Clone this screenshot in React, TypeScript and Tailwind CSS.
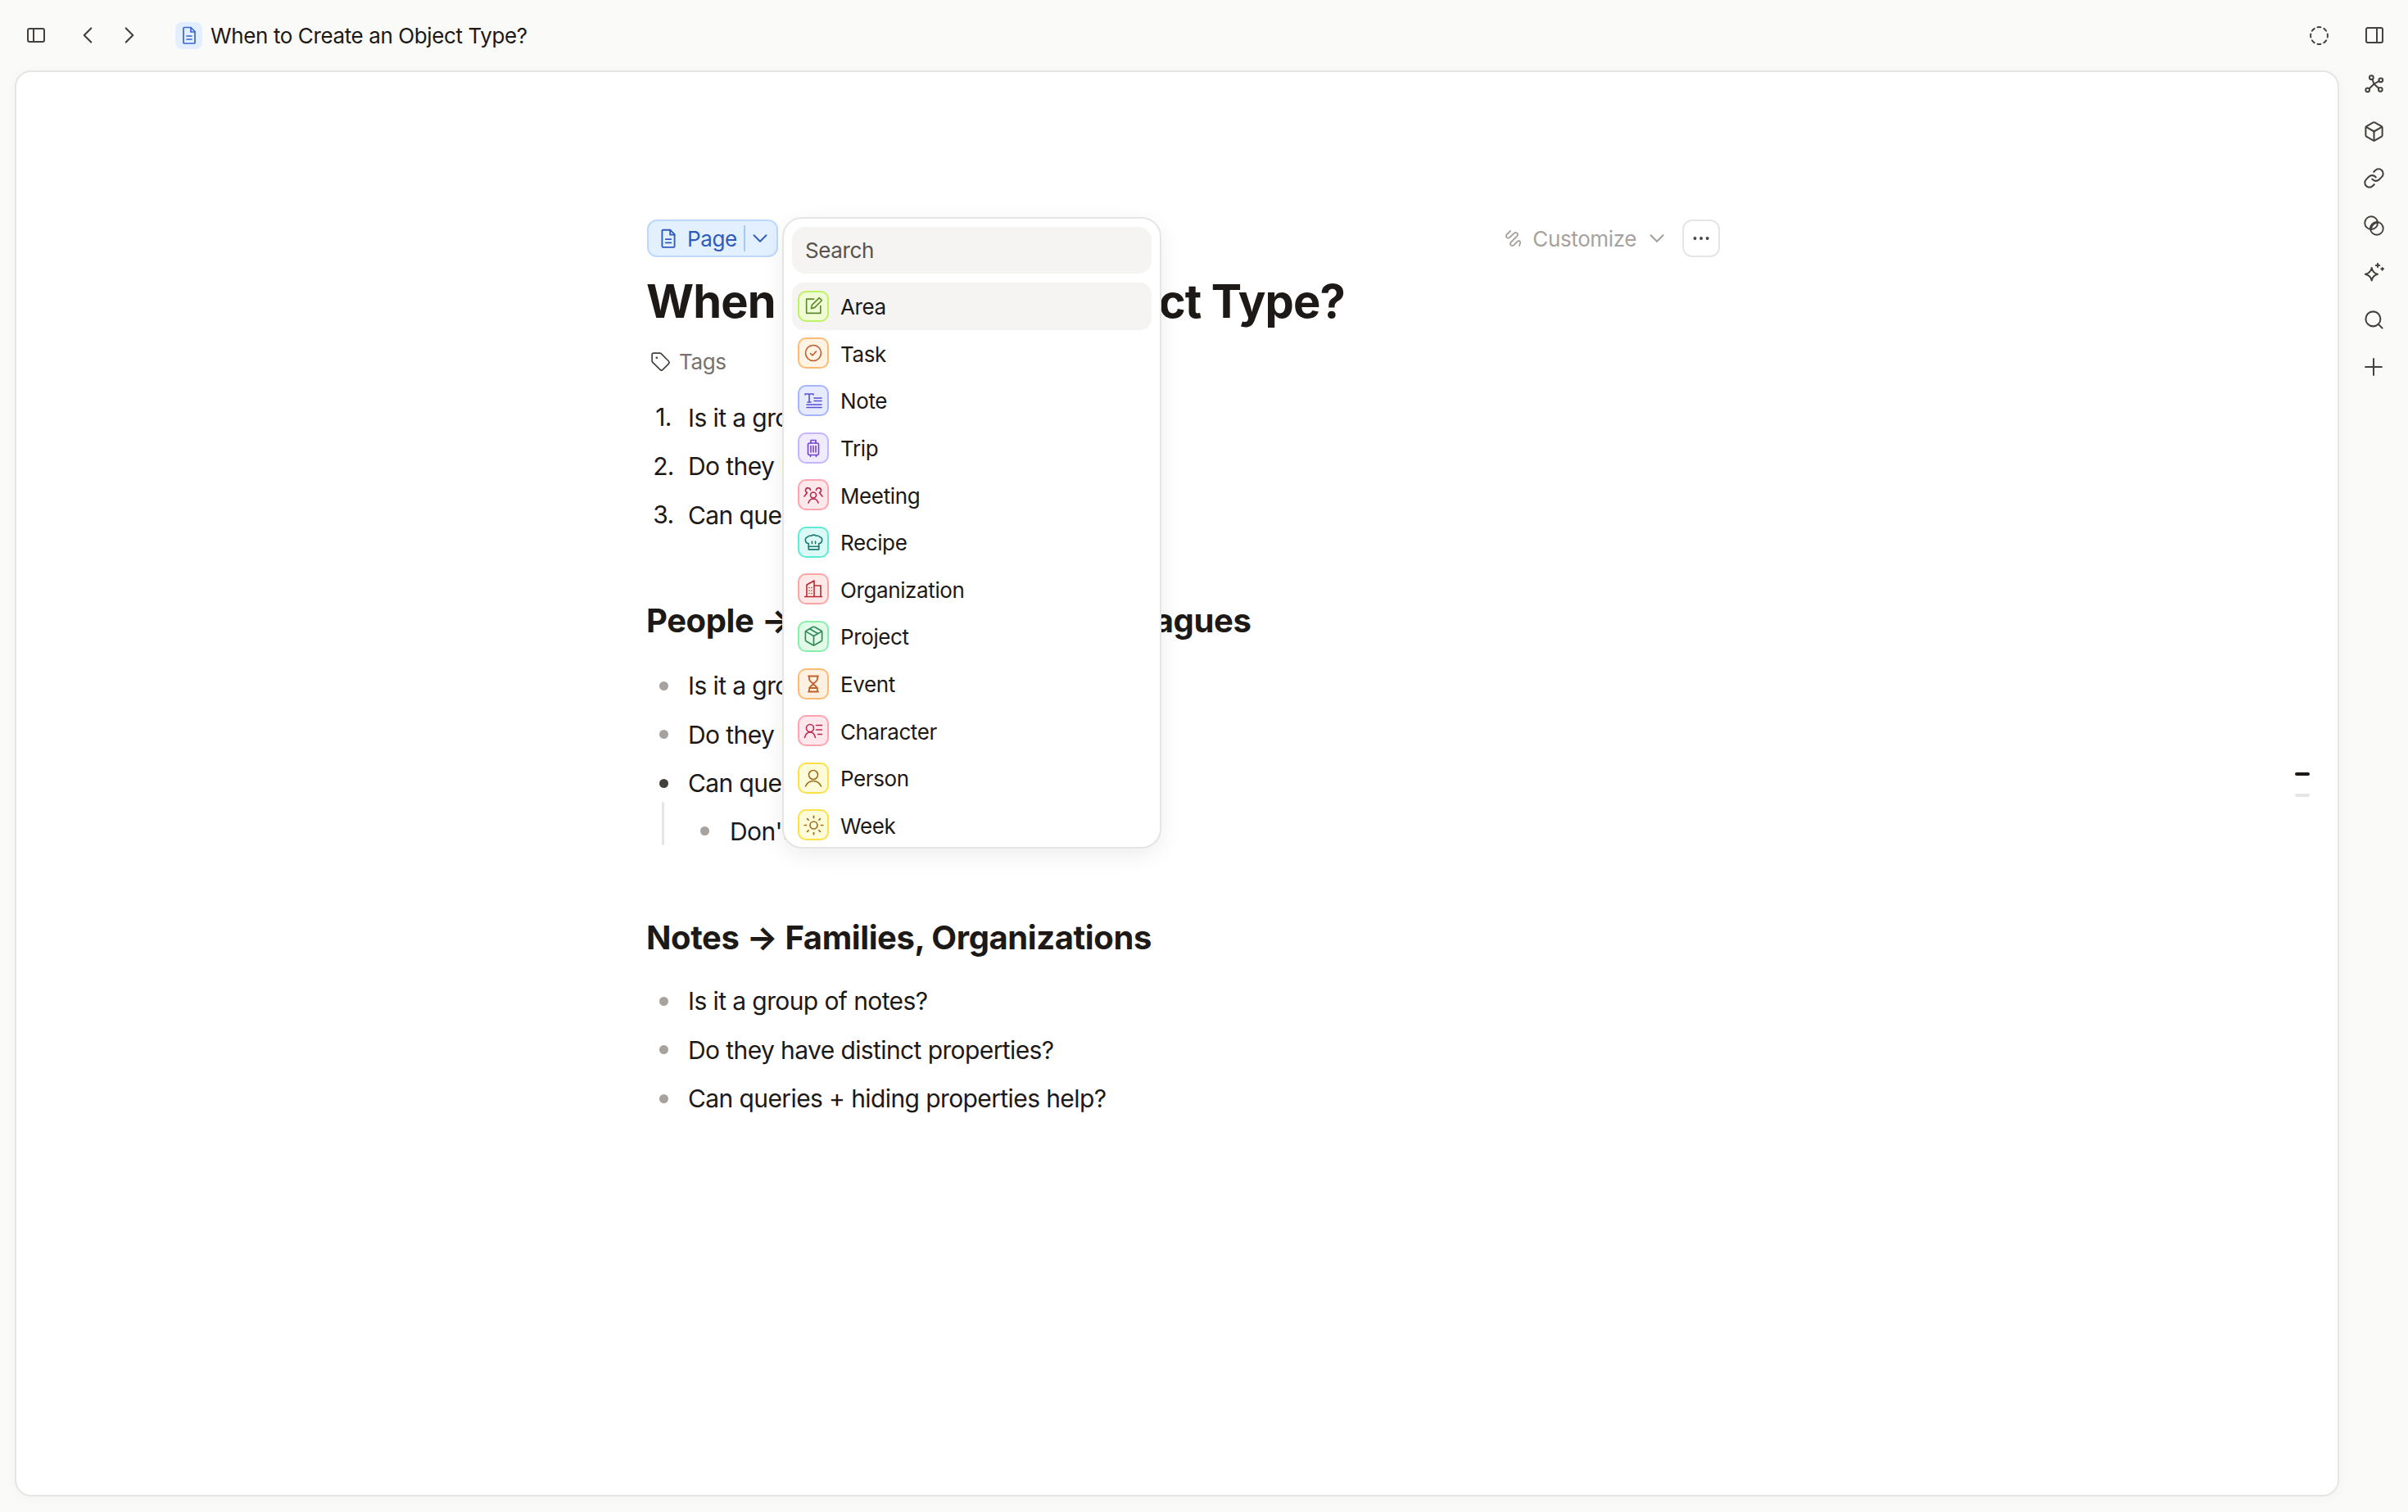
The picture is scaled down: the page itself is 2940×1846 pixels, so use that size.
import React from 'react';
import { ChevronDown, ChevronLeft, ChevronRight, CircleDashed, Ellipsis, Package, Plus, Search, Sun, Tag, Box, Link } from 'lucide-react';

const Ico = ({ size = 24, sw = 1.6, className = '', children }: { size?: number; sw?: number; className?: string; children: React.ReactNode }) => (
  <svg width={size} height={size} viewBox="0 0 24 24" fill="none" stroke="currentColor" strokeWidth={sw} strokeLinecap="round" strokeLinejoin="round" className={className}>
    {children}
  </svg>
);

const DocIcon = ({ size = 24, className = '' }: { size?: number; className?: string }) => (
  <Ico size={size} sw={1.7} className={className}>
    <path d="M6 2.500h8l5 5V21a1 1 0 0 1-1 1H6a1 1 0 0 1-1-1V3.500a1 1 0 0 1 1-1z" />
    <path d="M14 2.500V8h5M9 13h6M9 17h6" />
  </Ico>
);

const types = [
  {
    name: 'Area',
    tile: 'bg-[#f0fdd4] border-[#bef264] text-[#5f8a2e]',
    icon: (
      <Ico size={25}>
        <path d="M12 4H3.500v16.500H20V12" />
        <path d="M9 15l1-4 8.500-8.500 3 3L13 14z" />
      </Ico>
    ),
  },
  {
    name: 'Task',
    tile: 'bg-[#fff3e4] border-[#fdba74] text-[#c2582b]',
    icon: (
      <Ico>
        <circle cx="12" cy="12" r="9.500" />
        <path d="M8.500 12.500l2.500 2.500 4.500-5" />
      </Ico>
    ),
  },
  {
    name: 'Note',
    tile: 'bg-[#e6ebff] border-[#a5b4fc] text-[#5b4fd1]',
    icon: (
      <Ico>
        <path d="M2 5V4h10v1M7 4v10M5 14h4M13 9h9M13 12.500h9M4 17h18M4 20.500h18" />
      </Ico>
    ),
  },
  {
    name: 'Trip',
    tile: 'bg-[#f1ebff] border-[#c4b5fd] text-[#7341d6]',
    icon: (
      <Ico>
        <rect x="5.500" y="6" width="13" height="14.500" rx="2" />
        <path d="M9 6V2.500h6V6M9 9.500v7.500M12 9.500v7.500M15 9.500v7.500M8.500 20.500v2M15.500 20.500v2" />
      </Ico>
    ),
  },
  {
    name: 'Meeting',
    tile: 'bg-[#ffe8ec] border-[#fda4af] text-[#b3274a]',
    icon: (
      <Ico>
        <circle cx="12" cy="12.500" r="3.500" />
        <path d="M6 22c1-3.500 3-5 6-5s5 1.500 6 5M8.500 6.500a3 3 0 1 0-4 3L1 14M15.500 6.500a3 3 0 1 1 4 3L23 14" />
      </Ico>
    ),
  },
  {
    name: 'Recipe',
    tile: 'bg-[#dcfaf5] border-[#5eead4] text-[#1a7b72]',
    icon: (
      <Ico size={25}>
        <path d="M6 21h12v-7a4 4 0 0 0 1-7.800A4 4 0 0 0 14.800 5a4.500 4.500 0 0 0-5.600 0A4 4 0 0 0 5 6.200 4 4 0 0 0 6 14z" />
        <path d="M6 17.500h12M10 11.500v2.500M14 11.500v2.500" />
      </Ico>
    ),
  },
  {
    name: 'Organization',
    tile: 'bg-[#ffe8e8] border-[#fca5a5] text-[#b42b30]',
    icon: (
      <Ico>
        <path d="M1.500 21.500h21M4 21.500V7l9-5v19.500M13 8h8v13.500" />
        <path d="M7 10.500h.01M10 10.500h.01M7 14h.01M10 14h.01M7 17.500h.01M10 17.500h.01" />
      </Ico>
    ),
  },
  {
    name: 'Project',
    tile: 'bg-[#e2fbe9] border-[#86efac] text-[#2f8a56]',
    icon: <Package size={27} strokeWidth={1.5} />,
  },
  {
    name: 'Event',
    tile: 'bg-[#fff1e2] border-[#fdba74] text-[#c2612b]',
    icon: (
      <Ico sw={1.8}>
        <path d="M6 2.500h12M6 21.500h12M7 2.500V6c0 3 5 5 5 6s-5 3-5 6v3.500M17 2.500V6c0 3-5 5-5 6s5 3 5 6v3.500M7 17h10" />
      </Ico>
    ),
  },
  {
    name: 'Character',
    tile: 'bg-[#ffe7ed] border-[#fda4af] text-[#b9284f]',
    icon: (
      <Ico>
        <circle cx="8" cy="9" r="4.500" />
        <path d="M1.500 20.500c1-4.500 3.500-6.500 6.500-6.500s5.500 2 6.500 6.500M15.500 5.500h7M15.500 11h7M17.500 16.500h5" />
      </Ico>
    ),
  },
  {
    name: 'Person',
    tile: 'bg-[#fefbd8] border-[#fde047] text-[#a16c1b]',
    icon: (
      <Ico>
        <circle cx="12" cy="8" r="5.500" />
        <path d="M2.500 22c2-4.500 5-6.500 9.500-6.500s7.500 2 9.500 6.500" />
      </Ico>
    ),
  },
  {
    name: 'Week',
    tile: 'bg-[#fefbd8] border-[#fde047] text-[#a16c1b]',
    icon: <Sun size={27} strokeWidth={1.5} />,
  },
];

const railIcons = [
  <Ico key="graph" size={25} sw={1.9}>
    <circle cx="9" cy="4.500" r="2.300" />
    <circle cx="20" cy="7.500" r="2.300" />
    <circle cx="4.500" cy="19" r="2.300" />
    <circle cx="19.500" cy="18.500" r="2.300" />
    <path d="M10 6.500l2 5.500M18 8.500l-6 3.500M6.300 17.500L12 12M17.500 17L12 12" />
  </Ico>,
  <Box key="box" size={27} strokeWidth={1.8} />,
  <Link key="link" size={27} strokeWidth={1.8} />,
  <Ico key="overlap" size={27} sw={1.7}>
    <circle cx="9" cy="9" r="7" />
    <circle cx="15" cy="15" r="7" />
    <path d="M9 15.500a7 7 0 0 1 6.500-6.500" />
  </Ico>,
  <Ico key="spark" size={27} sw={1.7}>
    <path d="M9.500 7c.7 4 2.500 6 6.500 7-4 1-5.800 3-6.500 7-.7-4-2.500-6-7-7 4.500-1 6.300-3 7-7z" />
    <path d="M16 2.500v4M14 4.500h4M21 7v2.500M19.800 8.200h2.500" />
  </Ico>,
  <Search key="search" size={27} strokeWidth={1.8} />,
  <Plus key="plus" size={34} strokeWidth={1.4} />,
];

const Bullet = ({ dark = false }: { dark?: boolean }) => (
  <span className={`block w-[11px] h-[11px] rounded-full ${dark ? 'bg-[#44403c]' : 'bg-[#a8a29e]'}`} />
);

const Item = ({ marker, children }: { marker: React.ReactNode; children: React.ReactNode }) => (
  <div className="flex items-center h-[59.5px] text-[30px] tracking-[-0.02em] text-[#1c1917]">
    <span className="w-[40px] flex justify-center shrink-0 mt-[2px]">{marker}</span>
    <span className="ml-[10px] mt-[3px] whitespace-nowrap">{children}</span>
  </div>
);

export default function App() {
  return (
    <div className="w-full h-screen overflow-hidden flex flex-col bg-[#fafaf8] text-[#1c1917] font-['Inter',sans-serif]">
      {/* Top bar */}
      <div className="h-[86px] shrink-0 flex items-center text-[#44403c]">
        <div className="w-[22px] h-[18px] ml-[33px] rounded-[3px] border-[2.500px] border-[#44403c] flex">
          <div className="w-[7px] border-r-[2.500px] border-[#44403c]" />
        </div>
        <ChevronLeft size={34} strokeWidth={1.5} className="ml-[35px]" />
        <ChevronRight size={34} strokeWidth={1.5} className="ml-[17px]" />
        <div className="ml-[39px] w-[33px] h-[33px] rounded-[8px] bg-[#e3efff] text-[#3b66d0] flex items-center justify-center">
          <DocIcon size={24} />
        </div>
        <span className="ml-[10px] text-[26px] tracking-[-0.015em] text-[#1c1917] whitespace-nowrap">When to Create an Object Type?</span>
        <div className="ml-auto flex items-center">
          <CircleDashed size={25} strokeWidth={1.9} />
          <div className="ml-[44px] mr-[30px] w-[22px] h-[20px] rounded-[3px] border-[2.500px] border-[#44403c] flex justify-end">
            <div className="w-[7px] border-l-[2.500px] border-[#44403c]" />
          </div>
        </div>
      </div>

      <div className="flex-1 min-h-0 flex">
        {/* Document card */}
        <div className="relative flex-1 ml-[18px] mb-[19px] bg-white rounded-[20px] border-2 border-[#e7e5e4] shadow-[0_2px_16px_rgba(0,0,0,0.03)] pt-[180px] pl-[770px]">
          <div className="w-[1310px]">
            <div className="relative flex items-center justify-between h-[46px]">
              <div className="flex items-center w-[160px] h-[46px] rounded-[12px] border-2 border-[#bcd9fb] bg-[#e3f0ff] text-[#2f5bbf]">
                <DocIcon size={26} className="ml-[11px] shrink-0" />
                <span className="ml-[10px] text-[26px] tracking-[-0.015em] w-[60px]">Page</span>
                <span className="ml-[9px] w-[1.500px] h-[32px] bg-[#a8c8f0]" />
                <ChevronDown size={30} strokeWidth={1.5} className="ml-[3px]" />
              </div>
              <div className="flex items-center text-[#a8a29e]">
                <Ico size={24} sw={1.8}>
                  <path d="M8 3L3.500 7.500a2.500 2.500 0 0 0 3.500 3.500L13 5.500a2.500 2.500 0 0 1 3.500 3.500L8.500 17a2.500 2.500 0 0 0 3.500 3.500l5-5a2 2 0 0 1 3 2.500L19 21" />
                </Ico>
                <span className="ml-[11px] text-[26px] tracking-[-0.015em] whitespace-nowrap">Customize</span>
                <ChevronDown size={30} strokeWidth={1.7} className="ml-[10px]" />
                <div className="ml-[16px] w-[46px] h-[46px] rounded-[12px] border-2 border-[#e7e5e4] flex items-center justify-center text-[#44403c]">
                  <Ellipsis size={26} strokeWidth={1.6} />
                </div>
              </div>

              {/* Type picker */}
              <div className="absolute left-[165px] top-[-3px] w-[463px] h-[771px] z-10 overflow-hidden rounded-[24px] border-2 border-[#e7e5e4] bg-white shadow-[0_8px_28px_rgba(0,0,0,0.07)] pt-[10px] px-[10px]">
                <div className="h-[57px] rounded-[16px] bg-[#f5f4f2] flex items-center pl-[16px] text-[26px] tracking-[-0.015em] text-[#57534e]">Search</div>
                <div className="mt-[11px]">
                  {types.map((t, i) => (
                    <div key={t.name} className={`flex items-center h-[57.6px] pl-[7px] rounded-[14px] ${i === 0 ? 'bg-[#f5f4f2]' : ''}`}>
                      <div className={`w-[38px] h-[38px] rounded-[10px] border-2 flex items-center justify-center shrink-0 ${t.tile}`}>{t.icon}</div>
                      <span className="ml-[14px] mt-[2px] text-[26px] tracking-[-0.015em] text-[#1c1917]">{t.name}</span>
                    </div>
                  ))}
                </div>
              </div>
            </div>

            <h1 className="mt-[14px] ml-[-1px] h-[80px] flex items-center text-[56px] font-bold tracking-[-0.016em] whitespace-nowrap">When to Create an Object Type?</h1>
            <div className="mt-[9px] h-[48px] flex items-center ml-[4px] text-[26px] tracking-[-0.015em] text-[#78716c]">
              <Tag size={25} strokeWidth={1.6} className="text-[#44403c]" />
              <span className="ml-[10px]">Tags</span>
            </div>

            <div className="mt-[14px]">
              <Item marker="1.">Is it a group of people?</Item>
              <Item marker="2.">Do they have distinct properties?</Item>
              <Item marker="3.">Can queries + hiding properties help?</Item>
            </div>

            <h2 className="mt-[70px] ml-[-1px] h-[60px] flex items-center text-[40px] font-bold tracking-[-0.01em] whitespace-nowrap">People → Friends, Family &amp; Colleagues</h2>
            <div className="mt-[19px]">
              <Item marker={<Bullet />}>Is it a group of people?</Item>
              <Item marker={<Bullet />}>Do they have distinct properties?</Item>
              <Item marker={<Bullet dark />}>Can queries + hiding properties help?</Item>
              <div className="flex">
                <div className="ml-[18px] mt-[-6px] w-[3px] h-[53px] rounded-full bg-[#e7e5e4]" />
                <div className="flex items-center h-[59.5px] text-[30px] tracking-[-0.02em] pl-[44px]">
                  <Bullet />
                  <span className="ml-[25px] mt-[2px] whitespace-nowrap">Don't over-create types</span>
                </div>
              </div>
            </div>

            <h2 className="mt-[70px] ml-[-1px] h-[60px] flex items-center text-[40px] font-bold tracking-[-0.01em] whitespace-nowrap">Notes → Families, Organizations</h2>
            <div className="mt-[17px]">
              <Item marker={<Bullet />}>Is it a group of notes?</Item>
              <Item marker={<Bullet />}>Do they have distinct properties?</Item>
              <Item marker={<Bullet />}>Can queries + hiding properties help?</Item>
            </div>
          </div>

          {/* Scroll markers */}
          <div className="absolute right-[34px] top-[855px] w-[18px] h-[4px] rounded-full bg-[#1c1917]" />
          <div className="absolute right-[34px] top-[881px] w-[18px] h-[4px] rounded-full bg-[#e7e5e4]" />
        </div>

        {/* Right rail */}
        <div className="w-[84px] shrink-0 flex flex-col items-center mt-[-12px] text-[#44403c]">
          {railIcons.map((icon, i) => (
            <div key={i} className="h-[57.5px] flex items-center justify-center">{icon}</div>
          ))}
        </div>
      </div>
    </div>
  );
}
